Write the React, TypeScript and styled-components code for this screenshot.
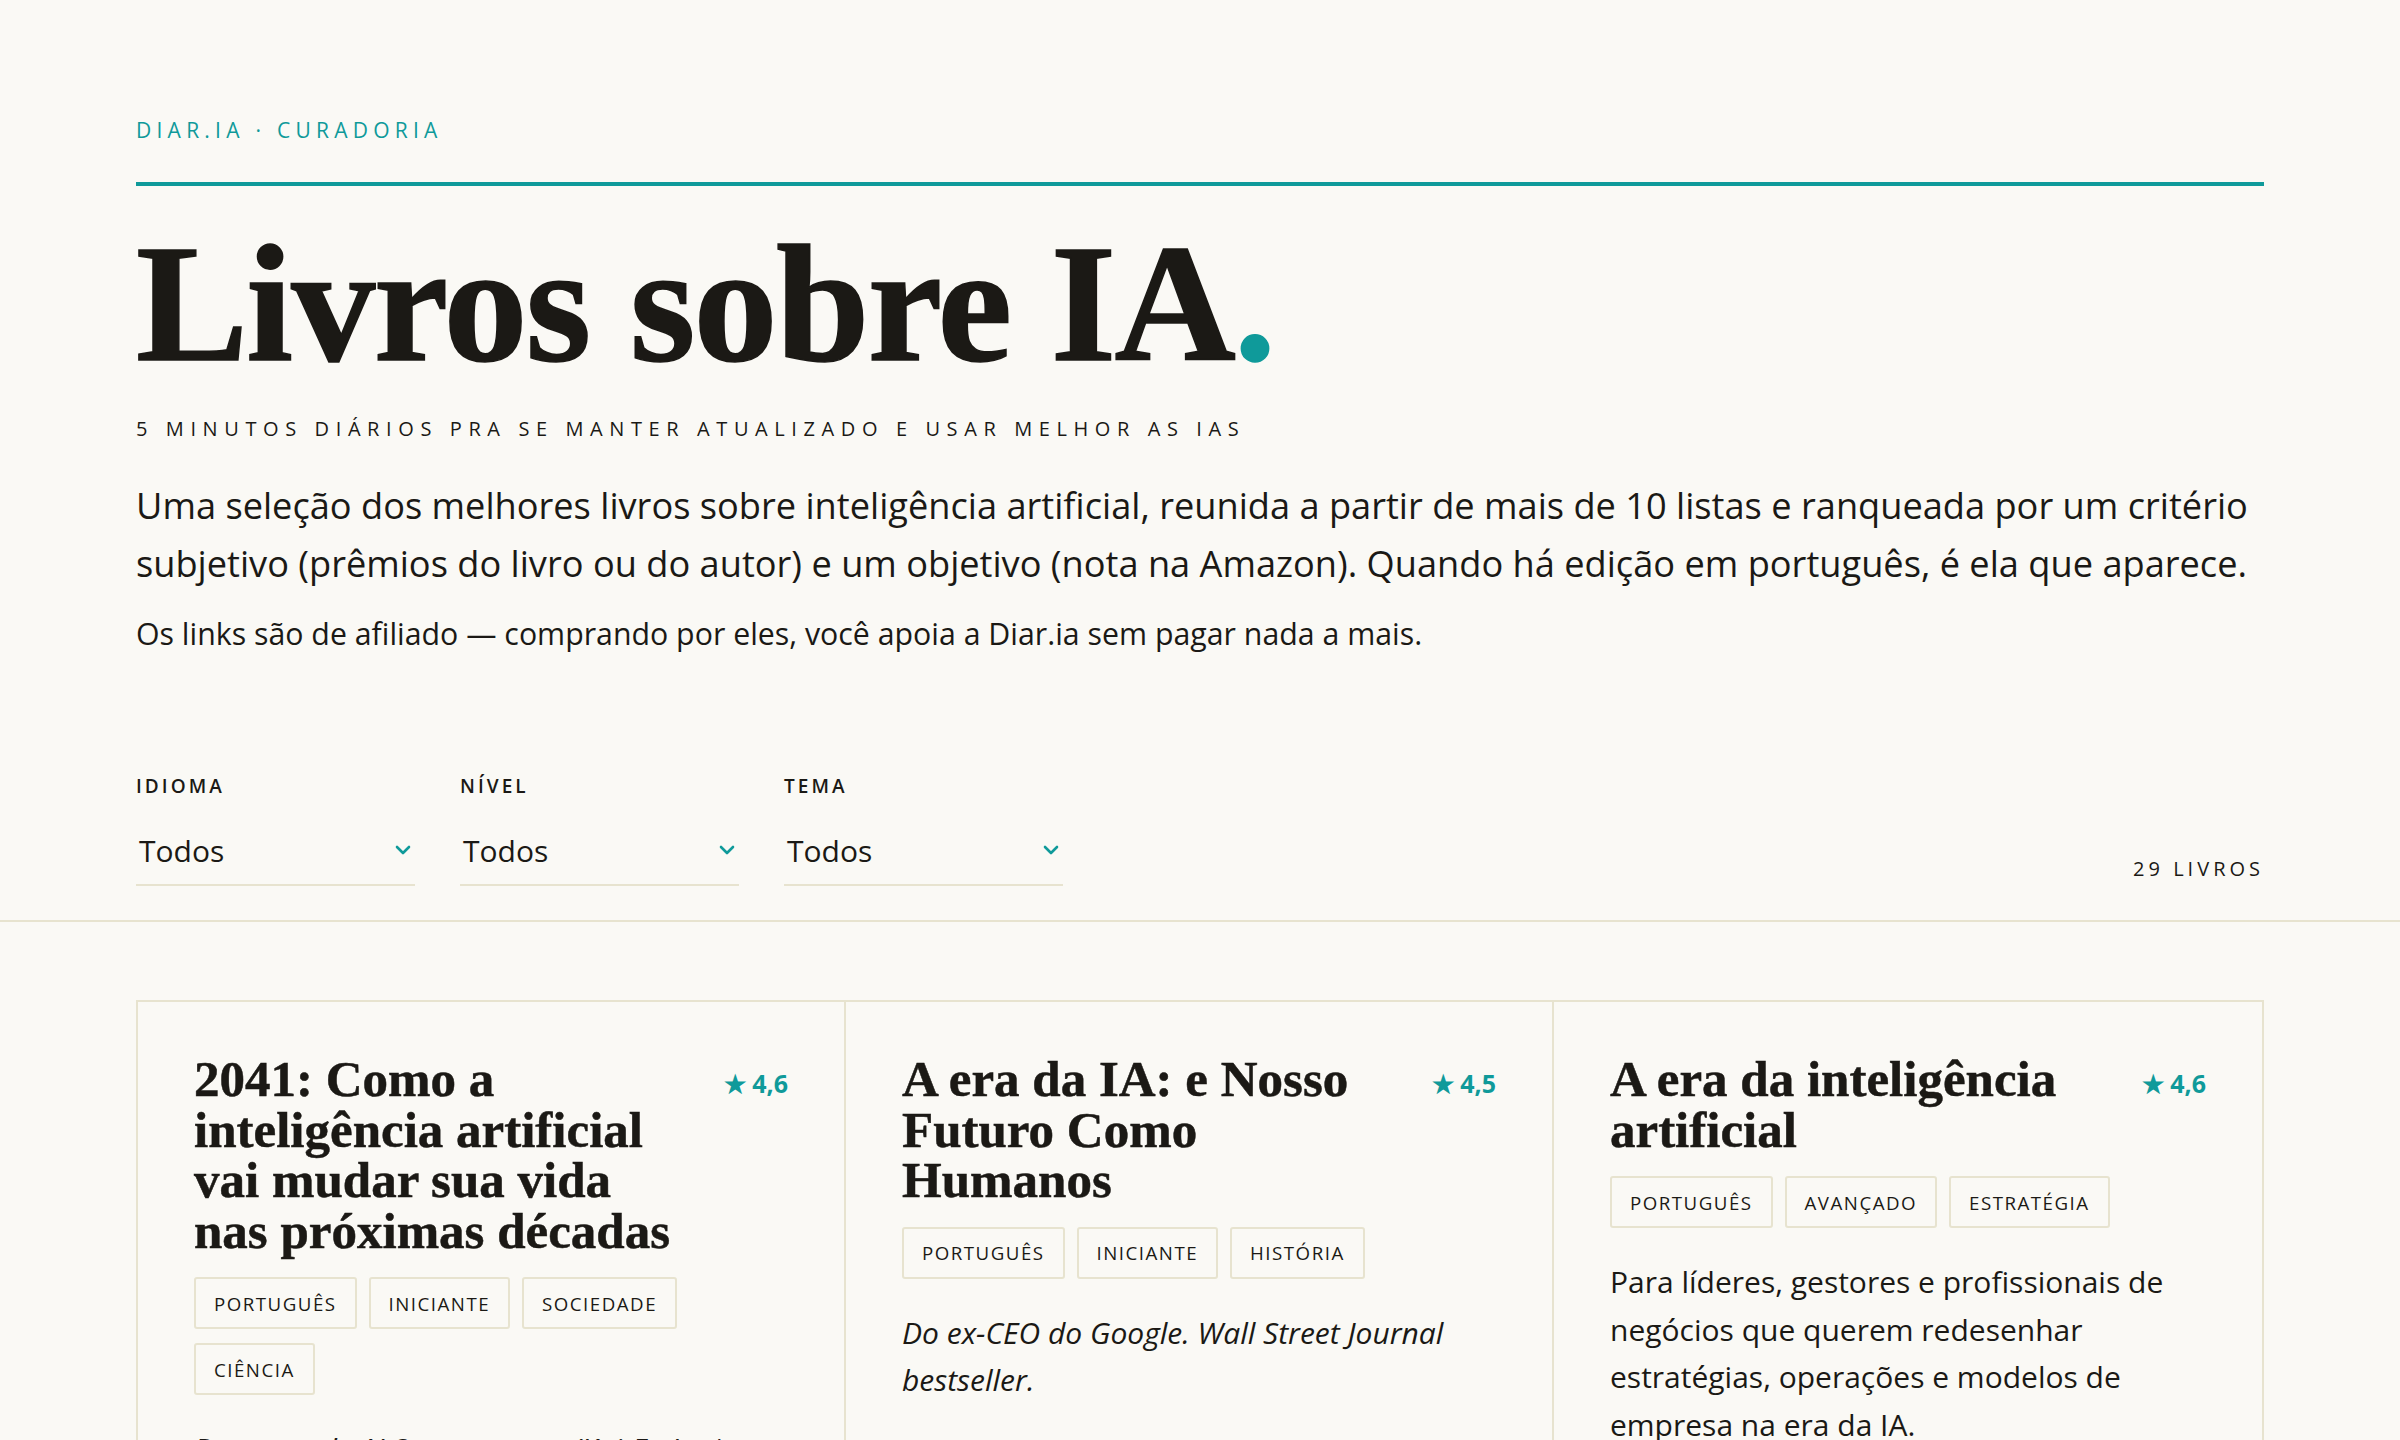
import React from "react";
import styled, { createGlobalStyle } from "styled-components";

const teal = "#0f9a9a";
const ink = "#1b1915";
const line = "#e7e3cf";
const bg = "#faf9f5";
const sans = `"Open Sans", "Noto Sans", sans-serif`;
const serif = `"Liberation Serif", "DejaVu Serif", serif`;

const Global = createGlobalStyle`
  html, body { margin: 0; padding: 0; background: ${bg}; }
  body { font-family: ${sans}; color: ${ink}; }
  * { box-sizing: border-box; }
`;

const Page = styled.div`
  min-height: 1440px;
  background: ${bg};
`;

const Container = styled.div`
  padding: 0 136px;
`;

const Header = styled.header`
  padding-top: 117px;
`;

const Eyebrow = styled.div`
  font-size: 21px;
  font-weight: 500;
  letter-spacing: 0.25em;
  color: ${teal};
  line-height: 26px;
`;

const Rule = styled.div`
  height: 4px;
  background: ${teal};
  margin-top: 39px;
`;

const Title = styled.h1`
  margin: 42px 0 0;
  font-family: ${serif};
  font-weight: 700;
  font-size: 168px;
  line-height: 150px;
  letter-spacing: -0.01em;
  color: ${ink};
  -webkit-text-stroke: 1.5px ${ink};
`;

const Dot = styled.span`
  color: ${teal};
  -webkit-text-stroke: 1.5px ${teal};
`;

const Tagline = styled.div`
  margin-top: 38px;
  font-size: 20px;
  letter-spacing: 0.33em;
  line-height: 26px;
  color: ${ink};
`;

const Lead = styled.p`
  margin: 34px 0 0;
  font-size: 36.2px;
  line-height: 58px;
`;

const Note = styled.p`
  margin: 20px 0 0;
  font-size: 30.3px;
  line-height: 44px;
`;

const FilterBar = styled.div`
  display: flex;
  align-items: flex-end;
  margin-top: 118px;
`;

const Filters = styled.div`
  display: flex;
  gap: 45px;
  flex: 1;
`;

const Filter = styled.div`
  width: 279px;
  display: flex;
  flex-direction: column;
`;

const FilterLabel = styled.div`
  font-size: 19px;
  font-weight: 600;
  letter-spacing: 0.16em;
  line-height: 24px;
`;

const Select = styled.div`
  margin-top: 27px;
  display: flex;
  align-items: center;
  justify-content: space-between;
  padding: 0 4px 9px 3px;
  height: 61px;
  border-bottom: 2px solid ${line};
  font-size: 30px;
`;

const Count = styled.div`
  font-size: 20px;
  letter-spacing: 0.2em;
  line-height: 26px;
  padding-bottom: 4px;
`;

const FullRule = styled.div`
  height: 2px;
  background: ${line};
  margin-top: 34px;
`;

const Grid = styled.div`
  margin-top: 78px;
  display: grid;
  grid-template-columns: repeat(3, 1fr);
  border: 2px solid ${line};
  border-bottom: none;
`;

const Card = styled.article<{ $last?: boolean }>`
  padding: 52px 56px 40px 56px;
  border-right: ${(p) => (p.$last ? "none" : `2px solid ${line}`)};
  min-height: 480px;
`;

const CardHead = styled.div`
  display: flex;
  justify-content: space-between;
  align-items: flex-start;
  gap: 20px;
`;

const CardTitle = styled.h2`
  margin: 0;
  font-family: ${serif};
  font-weight: 700;
  font-size: 51px;
  line-height: 50.5px;
  color: ${ink};
  max-width: 495px;
  -webkit-text-stroke: 0.5px ${ink};
`;

const Rating = styled.div`
  flex: none;
  color: ${teal};
  font-weight: 700;
  font-size: 25px;
  margin-top: 12px;
  white-space: nowrap;
`;

const Tags = styled.div`
  display: flex;
  flex-wrap: wrap;
  gap: 14px 12px;
  margin-top: 21px;
`;

const Tag = styled.span`
  display: inline-flex;
  align-items: center;
  height: 52px;
  padding: 0 18px;
  border: 2px solid ${line};
  border-radius: 3px;
  font-size: 18.7px;
  letter-spacing: 0.08em;
`;

const Desc = styled.p<{ $italic?: boolean }>`
  margin: 30px 0 0;
  font-size: 30px;
  line-height: 47.5px;
  font-style: ${(p) => (p.$italic ? "italic" : "normal")};
`;

const Chevron = () => (
  <svg width="16" height="10" viewBox="0 0 16 10" fill="none">
    <path d="M2 2l6 6 6-6" stroke={teal} strokeWidth="2.6" strokeLinecap="round" strokeLinejoin="round" />
  </svg>
);

const books = [
  {
    title: "2041: Como a inteligência artificial vai mudar sua vida nas próximas décadas",
    rating: "4,6",
    tags: ["PORTUGUÊS", "INICIANTE", "SOCIEDADE", "CIÊNCIA"],
    desc: "Do autor de AI Superpowers (Kai-Fu Lee).",
    italic: true,
  },
  {
    title: "A era da IA: e Nosso Futuro Como Humanos",
    rating: "4,5",
    tags: ["PORTUGUÊS", "INICIANTE", "HISTÓRIA"],
    desc: "Do ex-CEO do Google. Wall Street Journal bestseller.",
    italic: true,
  },
  {
    title: "A era da inteligência artificial",
    rating: "4,6",
    tags: ["PORTUGUÊS", "AVANÇADO", "ESTRATÉGIA"],
    desc: "Para líderes, gestores e profissionais de negócios que querem redesenhar estratégias, operações e modelos de empresa na era da IA.",
    italic: false,
  },
];

export default function App() {
  return (
    <Page>
      <Global />
      <Container>
        <Header>
          <Eyebrow>DIAR.IA · CURADORIA</Eyebrow>
          <Rule />
          <Title>
            Livros sobre IA<Dot>.</Dot>
          </Title>
          <Tagline>5 MINUTOS DIÁRIOS PRA SE MANTER ATUALIZADO E USAR MELHOR AS IAS</Tagline>
          <Lead>
            Uma seleção dos melhores livros sobre inteligência artificial, reunida a partir de mais de 10 listas e
            ranqueada por um critério subjetivo (prêmios do livro ou do autor) e um objetivo (nota na Amazon). Quando
            há edição em português, é ela que aparece.
          </Lead>
          <Note>Os links são de afiliado — comprando por eles, você apoia a Diar.ia sem pagar nada a mais.</Note>
        </Header>
        <FilterBar>
          <Filters>
            {["IDIOMA", "NÍVEL", "TEMA"].map((l) => (
              <Filter key={l}>
                <FilterLabel>{l}</FilterLabel>
                <Select>
                  <span>Todos</span>
                  <Chevron />
                </Select>
              </Filter>
            ))}
          </Filters>
          <Count>29 LIVROS</Count>
        </FilterBar>
      </Container>
      <FullRule />
      <Container>
        <Grid>
          {books.map((b, i) => (
            <Card key={i} $last={i === books.length - 1}>
              <CardHead>
                <CardTitle>{b.title}</CardTitle>
                <Rating>★ {b.rating}</Rating>
              </CardHead>
              <Tags>
                {b.tags.map((t) => (
                  <Tag key={t}>{t}</Tag>
                ))}
              </Tags>
              <Desc $italic={b.italic}>{b.desc}</Desc>
            </Card>
          ))}
        </Grid>
      </Container>
    </Page>
  );
}
